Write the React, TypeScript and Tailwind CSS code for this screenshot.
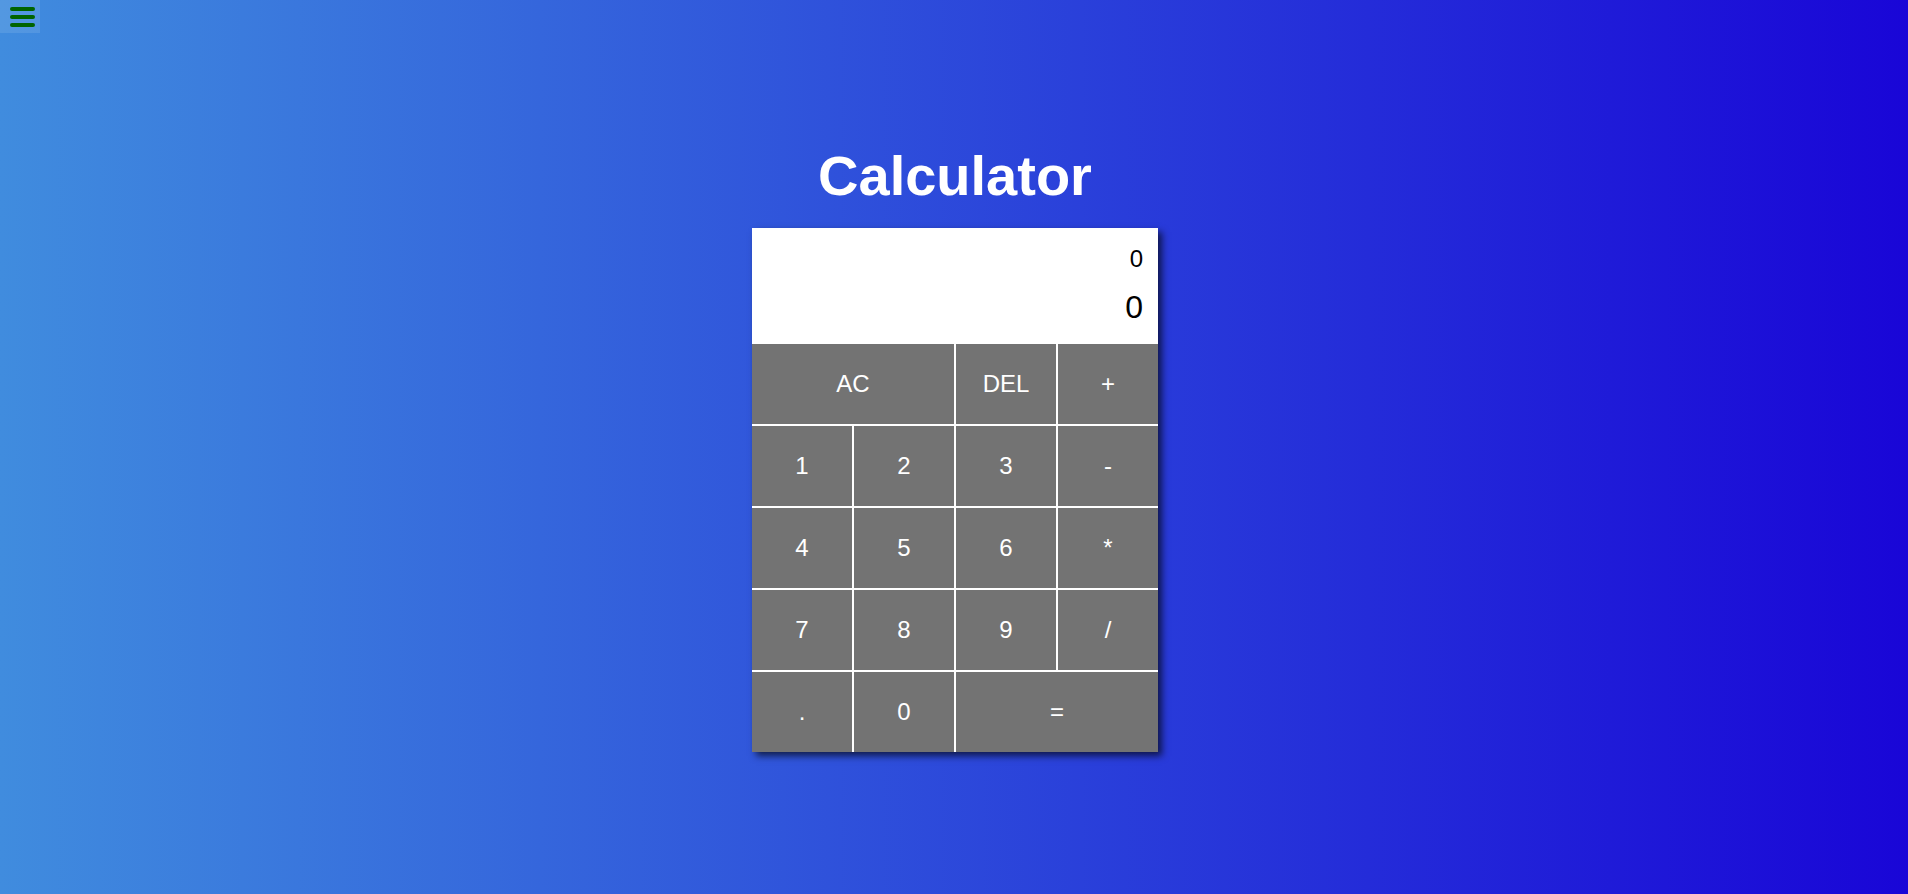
const keys: { label: string; span?: boolean }[] = [
  { label: "AC", span: true },
  { label: "DEL" },
  { label: "+" },
  { label: "1" },
  { label: "2" },
  { label: "3" },
  { label: "-" },
  { label: "4" },
  { label: "5" },
  { label: "6" },
  { label: "*" },
  { label: "7" },
  { label: "8" },
  { label: "9" },
  { label: "/" },
  { label: "." },
  { label: "0" },
  { label: "=", span: true },
];

function MenuButton() {
  return (
    <button className="absolute left-0 top-0 flex h-[33px] w-[40px] flex-col items-center justify-center gap-[4px] bg-white/10 pl-[5px]">
      <span className="block h-[4px] w-[25px] rounded-full bg-[#006400]" />
      <span className="block h-[4px] w-[25px] rounded-full bg-[#006400]" />
      <span className="block h-[4px] w-[25px] rounded-full bg-[#006400]" />
    </button>
  );
}

export default function App() {
  return (
    <div className="relative flex min-h-screen flex-col items-center justify-center bg-[linear-gradient(to_right,#408cde,#1906d7)] pl-[2px] font-['Liberation_Sans',Arial,sans-serif]">
      <MenuButton />
      <h1 className="text-[56px] font-bold leading-[68px] text-white">Calculator</h1>
      <div className="mt-[18px] w-[406px] shadow-[4px_4px_7px_rgba(0,0,0,0.65)]">
        <div className="flex h-[116px] flex-col items-end justify-evenly bg-white pr-[15px] text-black">
          <div className="text-[24px] leading-[26px]">0</div>
          <div className="text-[32px] leading-[37px]">0</div>
        </div>
        <div className="grid grid-cols-[repeat(4,100px)] grid-rows-[repeat(5,80px)] gap-[2px] bg-white">
          {keys.map((k) => (
            <button
              key={k.label}
              className={`flex items-center justify-center bg-[#737373] text-[24px] text-white ${
                k.span ? "col-span-2" : ""
              }`}
            >
              {k.label}
            </button>
          ))}
        </div>
      </div>
    </div>
  );
}
